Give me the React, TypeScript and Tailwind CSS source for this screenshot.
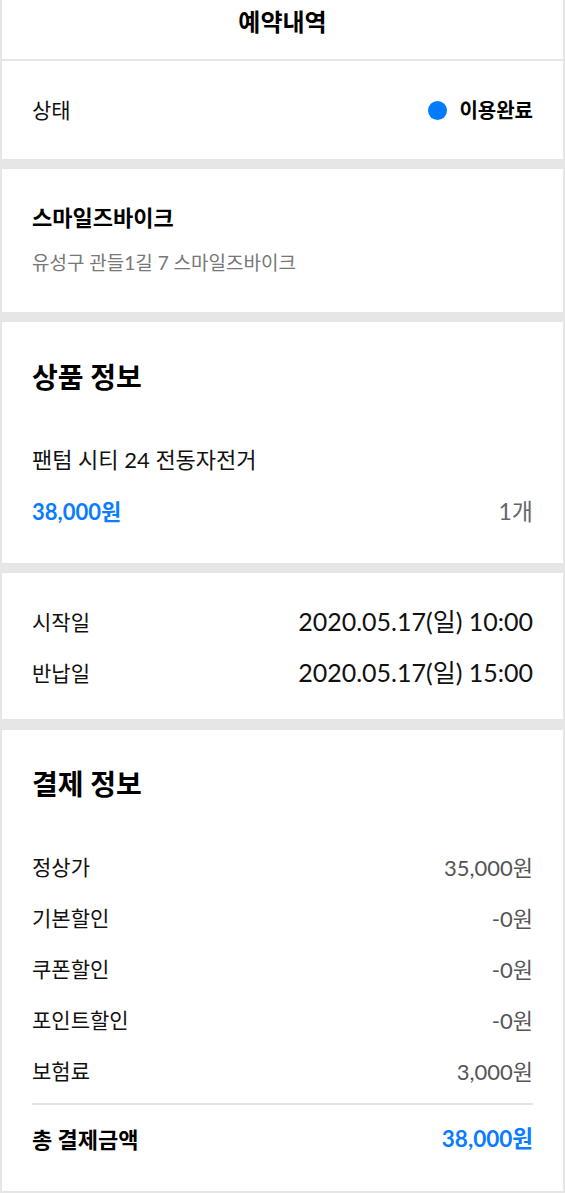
import React from "react";

const FONT = "font-['Lato','Noto_Sans_CJK_KR',sans-serif]";

const fees = [
  { label: "정상가", value: "35,000원" },
  { label: "기본할인", value: "-0원" },
  { label: "쿠폰할인", value: "-0원" },
  { label: "포인트할인", value: "-0원" },
  { label: "보험료", value: "3,000원" },
];

function Row({ label, value, valueClass }: { label: string; value: string; valueClass: string }) {
  return (
    <div className="flex items-center justify-between h-[30px]">
      <span className="text-[21px] text-[#111]">{label}</span>
      <span className={valueClass}>{value}</span>
    </div>
  );
}

export default function App() {
  return (
    <div className={`${FONT} min-h-[1193px] bg-[#e6e6e6] px-[2px] pb-[2px] flex flex-col`}>
      {/* header */}
      <header className="bg-white h-[59px] pt-[6px] text-center">
        <h1 className="text-[24px] leading-[32px] font-bold text-black">예약내역</h1>
      </header>

      {/* status */}
      <section className="mt-[2px] bg-white h-[98px] px-[30px] flex items-center justify-between">
        <span className="text-[21px] text-[#111]">상태</span>
        <span className="flex items-center gap-[12px] text-[20px] font-bold text-black">
          <span className="w-[19px] h-[19px] rounded-full bg-[#007bff]" />
          이용완료
        </span>
      </section>

      {/* shop */}
      <section className="mt-[10px] bg-white h-[143px] px-[30px] pt-[34px]">
        <div className="text-[22px] leading-[30px] font-bold text-black">스마일즈바이크</div>
        <div className="mt-[17px] text-[19px] leading-[26px] text-[#777]">유성구 관들1길 7 스마일즈바이크</div>
      </section>

      {/* product */}
      <section className="mt-[10px] bg-white h-[241px] px-[30px] pt-[37px]">
        <h2 className="text-[28px] leading-[36px] font-bold text-black">상품 정보</h2>
        <div className="mt-[50px] text-[22px] leading-[30px] text-[#111]">팬텀 시티 24 전동자전거</div>
        <div className="mt-[21px] flex items-center justify-between h-[30px]">
          <span className="text-[22px] font-bold text-[#0a7cff]">38,000원</span>
          <span className="text-[23px] text-[#666]">1개</span>
        </div>
      </section>

      {/* dates */}
      <section className="mt-[10px] bg-white h-[146px] px-[30px] pt-[34px] flex flex-col gap-[21px]">
        <Row label="시작일" value="2020.05.17(일) 10:00" valueClass="text-[25px] text-[#111]" />
        <Row label="반납일" value="2020.05.17(일) 15:00" valueClass="text-[25px] text-[#111]" />
      </section>

      {/* payment */}
      <section className="mt-[11px] bg-white flex-1 px-[30px] pt-[36px] pb-[36px]">
        <h2 className="text-[28px] leading-[36px] font-bold text-black">결제 정보</h2>
        <div className="mt-[50px] flex flex-col gap-[21px]">
          {fees.map((f) => (
            <Row key={f.label} label={f.label} value={f.value} valueClass="text-[22px] text-[#555]" />
          ))}
        </div>
        <div className="mt-[17px] h-[2px] bg-[#e3e3e3]" />
        <div className="mt-[19px] flex items-center justify-between h-[30px]">
          <span className="text-[22px] font-bold text-black">총 결제금액</span>
          <span className="text-[22.5px] font-bold text-[#0a7cff]">38,000원</span>
        </div>
      </section>
    </div>
  );
}
